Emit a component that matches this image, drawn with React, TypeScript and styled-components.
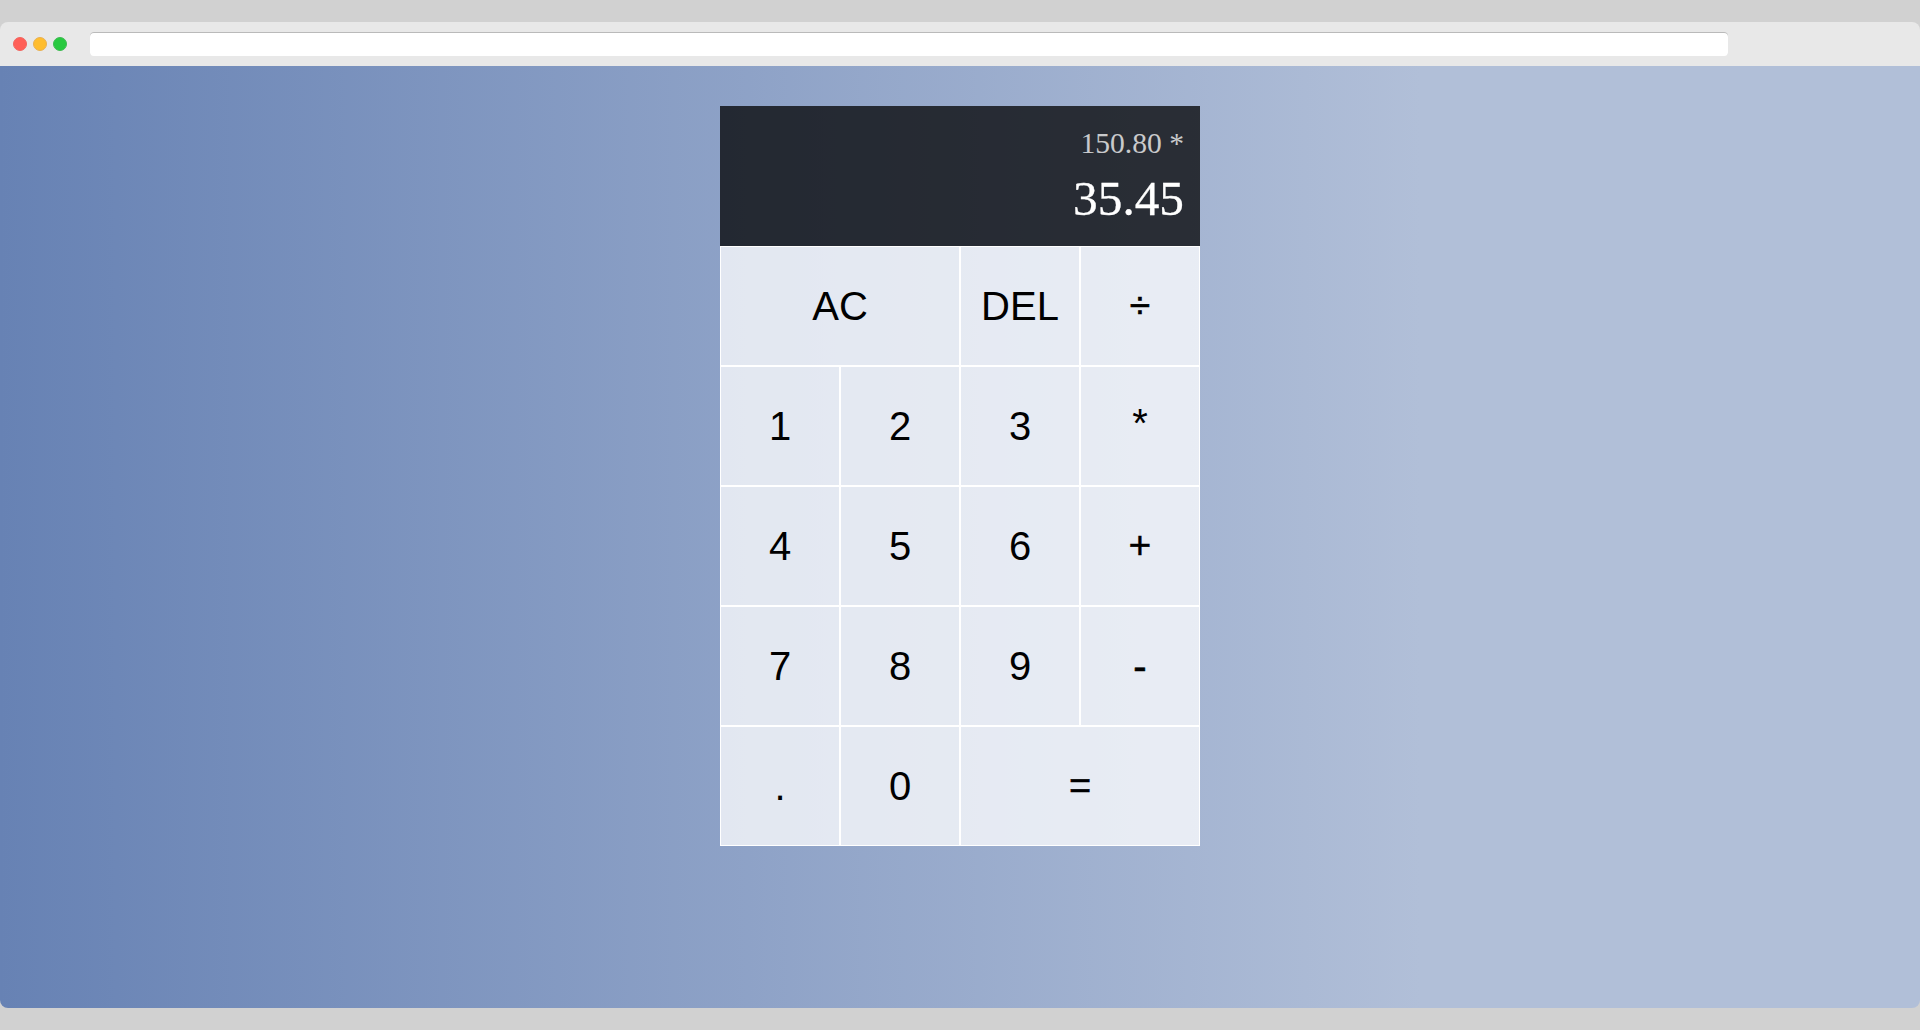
import React from 'react';
import styled, { createGlobalStyle } from 'styled-components';

const GlobalStyle = createGlobalStyle`
  *, *::before, *::after { box-sizing: border-box; }
  body { margin: 0; background: #d1d1d1; }
`;

const Desktop = styled.div`
  height: 1030px;
  padding: 22px 0;
  overflow: hidden;
`;

const Window = styled.div`
  display: flex;
  flex-direction: column;
  height: 986px;
  border-radius: 8px;
  overflow: hidden;
`;

const TitleBar = styled.header`
  display: flex;
  align-items: center;
  flex: 0 0 44px;
  padding-left: 13px;
  background: #e8e8e8;
`;

const Lights = styled.div`
  display: flex;
  gap: 6px;
  margin-right: 23px;
`;

const Light = styled.span<{ $fill: string; $edge: string }>`
  width: 14px;
  height: 14px;
  border: 1px solid ${(p) => p.$edge};
  border-radius: 50%;
  background: ${(p) => p.$fill};
`;

const AddressBar = styled.div`
  width: 1638px;
  height: 24px;
  border-radius: 4px;
  background: #fff;
  box-shadow: inset 0 1px 0 #bababa;
`;

const Page = styled.main`
  flex: 1;
  padding-top: 40px;
  background: linear-gradient(to right, #6782b4 0%, #b1bfd8 74%);
`;

const Calculator = styled.div`
  display: grid;
  justify-content: center;
  grid-template-columns: repeat(4, 120px);
  grid-template-rows: 140px repeat(5, 120px);
`;

const Output = styled.div`
  grid-column: 1 / -1;
  display: flex;
  flex-direction: column;
  align-items: flex-end;
  padding: 20px 16px 0;
  background: rgba(0, 0, 0, 0.75);
  font-family: 'Liberation Serif', 'Times New Roman', serif;
`;

const Previous = styled.div`
  color: rgba(255, 255, 255, 0.75);
  font-size: 29.6px;
  line-height: 34px;
`;

const Current = styled.div`
  margin-top: 11px;
  color: #fff;
  font-size: 49.3px;
  line-height: 56px;
  -webkit-text-stroke: 0.3px #fff;
`;

const Key = styled.button<{ $wide?: boolean; $size?: number; $stroke?: number; $lift?: number }>`
  grid-column: span ${(p) => (p.$wide ? 2 : 1)};
  padding: 0 0 ${(p) => p.$lift ?? 0}px;
  border: 1px solid #fff;
  border-radius: 0;
  outline: none;
  background: rgba(255, 255, 255, 0.75);
  color: #000;
  font-family: 'Liberation Sans', Arial, sans-serif;
  font-size: ${(p) => p.$size ?? 40}px;
  -webkit-text-stroke: ${(p) => p.$stroke ?? 0}px #000;
  cursor: pointer;
`;

const lights = [
  { fill: '#ff5f57', edge: '#f2655f' },
  { fill: '#ffbd2e', edge: '#e9b050' },
  { fill: '#28c940', edge: '#3dbb50' },
];

interface KeySpec {
  label: string;
  wide?: boolean;
  size?: number;
  stroke?: number;
  lift?: number;
}

const keys: KeySpec[] = [
  { label: 'AC', wide: true },
  { label: 'DEL' },
  { label: '÷', size: 37, stroke: 0.7 },
  { label: '1' },
  { label: '2' },
  { label: '3' },
  { label: '*', lift: 6 },
  { label: '4' },
  { label: '5' },
  { label: '6' },
  { label: '+', size: 39, stroke: 0.4, lift: 2 },
  { label: '7' },
  { label: '8' },
  { label: '9' },
  { label: '-', stroke: 0.6 },
  { label: '.' },
  { label: '0' },
  { label: '=', wide: true, size: 38, stroke: 0.5 },
];

export default function App() {
  return (
    <>
      <GlobalStyle />
      <Desktop>
        <Window>
          <TitleBar>
            <Lights>
              {lights.map((l) => (
                <Light key={l.fill} $fill={l.fill} $edge={l.edge} />
              ))}
            </Lights>
            <AddressBar />
          </TitleBar>
          <Page>
            <Calculator>
              <Output>
                <Previous>150.80 *</Previous>
                <Current>35.45</Current>
              </Output>
              {keys.map((k) => (
                <Key key={k.label} $wide={k.wide} $size={k.size} $stroke={k.stroke} $lift={k.lift}>
                  {k.label}
                </Key>
              ))}
            </Calculator>
          </Page>
        </Window>
      </Desktop>
    </>
  );
}
